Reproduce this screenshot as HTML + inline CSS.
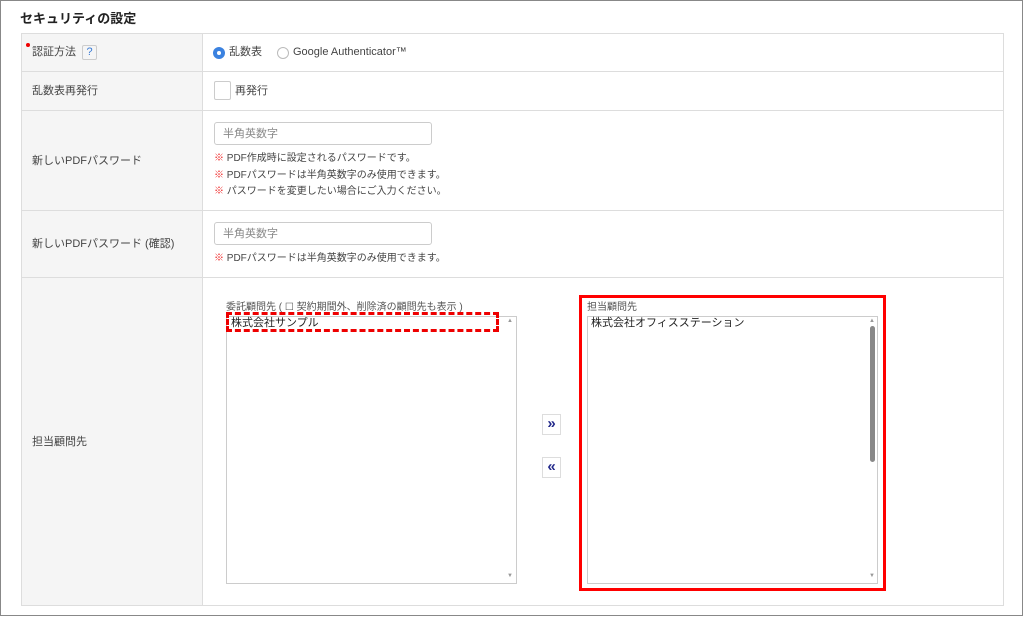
<!DOCTYPE html>
<html><head><meta charset="utf-8"><style>
*{box-sizing:border-box;margin:0;padding:0}
body{width:1024px;height:617px;background:#fff;font-family:"Liberation Sans","Noto Sans CJK JP",sans-serif;color:#333;position:relative;overflow:hidden;line-height:1}
.a{position:absolute}
.frame{left:0;top:0;width:1023px;height:616px;border:1px solid #888}
.t{font-size:11px;color:#444}
.hl{background:#ddd;height:1px;left:21px;width:983px}
.lab{background:#f5f5f5}
.inp{border:1px solid #ccc;border-radius:3px;height:23px;width:218px;font-size:11px;color:#888;padding:6px 8px;background:#fff}
.note{font-size:10px;color:#444}
.note b{color:#e22;font-weight:normal}
.lb{border:1px solid #ccc;background:#fff}
</style></head><body>
<div class="a frame"></div>
<div class="a" style="left:20px;top:12px;font-size:13px;font-weight:bold;color:#222">セキュリティの設定</div>
<div class="a lab" style="left:21px;top:33px;width:181px;height:573px"></div>
<div class="a" style="left:21px;top:33px;width:983px;height:573px;border:1px solid #ddd"></div>
<div class="a" style="left:202px;top:33px;width:1px;height:573px;background:#ddd"></div>
<div class="a hl" style="top:71px"></div>
<div class="a hl" style="top:110px"></div>
<div class="a hl" style="top:210px"></div>
<div class="a hl" style="top:277px"></div>
<div class="a" style="left:26px;top:43px;width:4px;height:4px;border-radius:2px;background:#e00"></div>
<div class="a t" style="left:32px;top:47px">認証方法</div>
<div class="a" style="left:82px;top:45px;width:15px;height:15px;border:1px solid #ccc;border-radius:2px;font-size:11px;color:#3a7bd5;text-align:center;line-height:13px">?</div>
<div class="a" style="left:213px;top:47px;width:12px;height:12px;border-radius:6px;background:#3b82e0"></div>
<div class="a" style="left:217px;top:51px;width:4px;height:4px;border-radius:2px;background:#fff"></div>
<div class="a t" style="left:229px;top:47px">乱数表</div>
<div class="a" style="left:277px;top:47px;width:12px;height:12px;border-radius:6px;border:1px solid #bbb"></div>
<div class="a t" style="left:293px;top:47px">Google Authenticator™</div>
<div class="a t" style="left:32px;top:86px">乱数表再発行</div>
<div class="a" style="left:214px;top:81px;width:17px;height:19px;border:1px solid #ccc;border-radius:2px"></div>
<div class="a t" style="left:235px;top:86px">再発行</div>
<div class="a t" style="left:32px;top:156px">新しいPDFパスワード</div>
<div class="a inp" style="left:214px;top:122px">半角英数字</div>
<div class="a note" style="left:214px;top:154px"><b>※</b> PDF作成時に設定されるパスワードです。</div>
<div class="a note" style="left:214px;top:171px"><b>※</b> PDFパスワードは半角英数字のみ使用できます。</div>
<div class="a note" style="left:214px;top:187px"><b>※</b> パスワードを変更したい場合にご入力ください。</div>
<div class="a t" style="left:32px;top:239px">新しいPDFパスワード (確認)</div>
<div class="a inp" style="left:214px;top:222px">半角英数字</div>
<div class="a note" style="left:214px;top:254px"><b>※</b> PDFパスワードは半角英数字のみ使用できます。</div>
<div class="a t" style="left:32px;top:437px">担当顧問先</div>
<div class="a note" style="left:226px;top:303px;color:#555">委託顧問先 ( ☐ 契約期間外、削除済の顧問先も表示 )</div>
<div class="a lb" style="left:226px;top:316px;width:291px;height:268px"></div>
<div class="a" style="left:507px;top:318px;font-size:6px;color:#999">▲</div>
<div class="a" style="left:507px;top:573px;font-size:6px;color:#999">▼</div>
<div class="a" style="left:226px;top:312px;width:273px;height:20px;border:3px dashed #e00"></div>
<div class="a" style="left:231px;top:318px;font-size:11px;color:#222">株式会社サンプル</div>
<div class="a" style="left:542px;top:414px;width:19px;height:21px;border:1px solid #ddd;background:#fff;color:#22288a;font-size:15px;font-weight:bold;text-align:center;line-height:18px">»</div>
<div class="a" style="left:542px;top:457px;width:19px;height:21px;border:1px solid #ddd;background:#fff;color:#22288a;font-size:15px;font-weight:bold;text-align:center;line-height:18px">«</div>
<div class="a" style="left:579px;top:295px;width:307px;height:296px;border:3px solid #f00"></div>
<div class="a note" style="left:587px;top:303px;color:#555">担当顧問先</div>
<div class="a lb" style="left:587px;top:316px;width:291px;height:268px"></div>
<div class="a" style="left:591px;top:318px;font-size:11px;color:#222">株式会社オフィスステーション</div>
<div class="a" style="left:870px;top:326px;width:5px;height:136px;border-radius:3px;background:#888"></div>
<div class="a" style="left:869px;top:318px;font-size:6px;color:#999">▲</div>
<div class="a" style="left:869px;top:573px;font-size:6px;color:#999">▼</div>
</body></html>
